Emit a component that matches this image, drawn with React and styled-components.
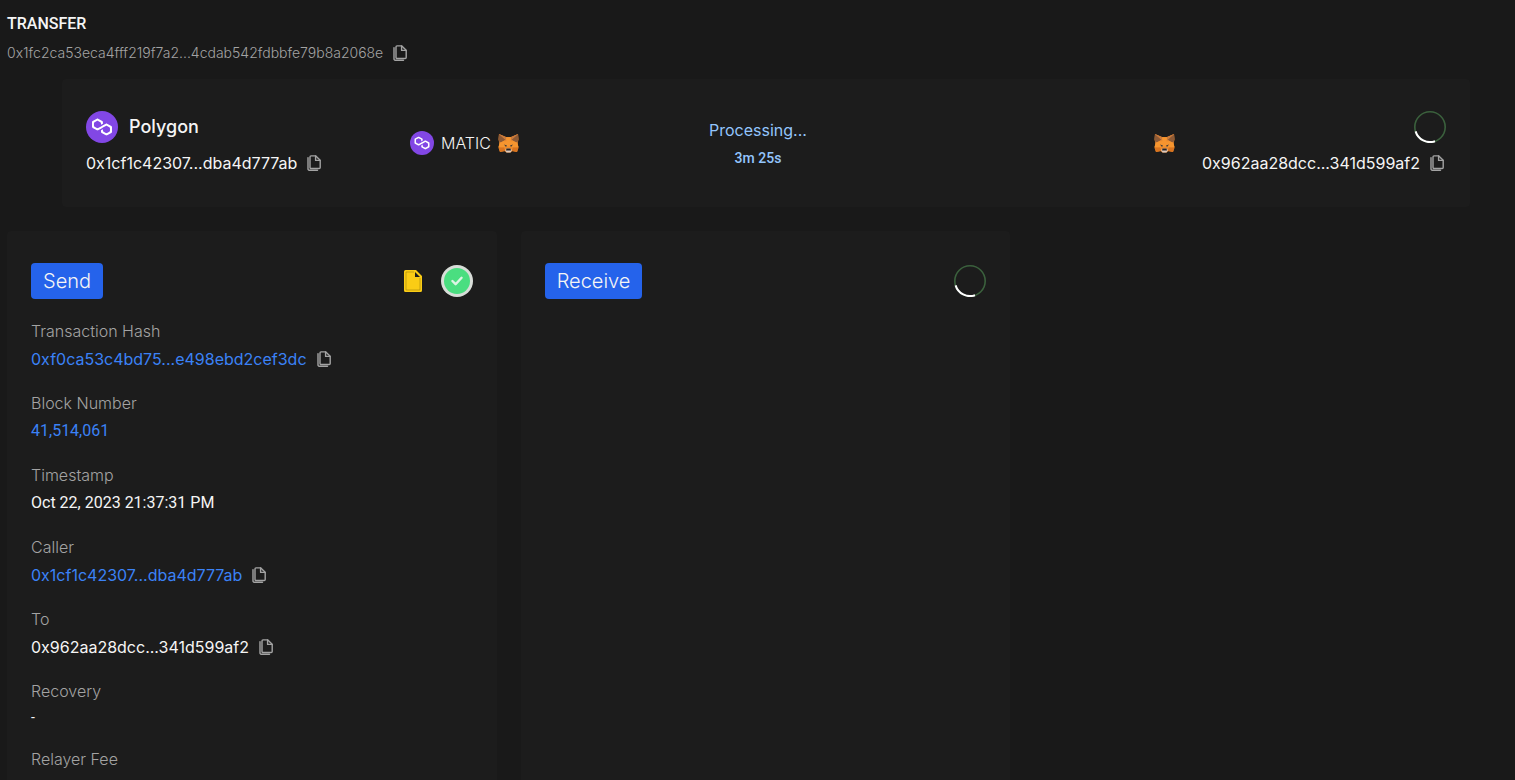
import React from 'react'
import styled, { createGlobalStyle } from 'styled-components'

const GlobalStyle = createGlobalStyle`
  * {
    box-sizing: border-box;
  }

  body {
    margin: 0;
    background: #191919;
    color: #f5f5f5;
    font-family: Inter, "Open Sans", sans-serif;
    font-size: 16px;
    line-height: 24px;
  }
`

const Page = styled.main`
  display: flex;
  flex-direction: column;
  height: 100vh;
  padding: 12px 0 0 7px;
  overflow: hidden auto;
  scrollbar-width: none;
`

const PageHeader = styled.header`
  display: flex;
  flex-direction: column;
  gap: 7px;
  margin-bottom: 16px;
`

const Title = styled.h1`
  margin: 0;
  font-family: Roboto, sans-serif;
  font-size: 16px;
  font-weight: 500;
  line-height: 24px;
`

const CopyLine = styled.div`
  display: flex;
  align-items: center;
  gap: 8px;
  color: ${props => props.$muted ? '#a3a3a3' : 'inherit'};
  font-family: Inter, sans-serif;
  font-size: ${props => props.$muted ? '14px' : '16px'};
  font-weight: ${props => props.$muted ? '300' : '400'};
  line-height: ${props => props.$muted ? '20px' : '24px'};
  white-space: nowrap;
`

const CopyButton = styled.button`
  display: flex;
  padding: 0 2px;
  border: 0;
  background: none;
  color: #a3a3a3;
  cursor: pointer;
`

const Summary = styled.section`
  display: grid;
  grid-template-columns: 324fr 156fr 384fr 225fr 271fr;
  align-items: center;
  margin: 0 45px 24px 55px;
  padding: 32px 24px;
  border-radius: 4px;
  background: #1c1c1c;
`

const Party = styled.div`
  display: flex;
  flex-direction: column;
  align-items: ${props => props.$end ? 'flex-end' : 'flex-start'};
  gap: 8px;
`

const Chain = styled.div`
  display: flex;
  align-items: center;
  gap: 11px;
  font-size: 18px;
  font-weight: 500;
`

const Asset = styled.div`
  display: flex;
  align-items: center;
  justify-content: ${props => props.$end ? 'flex-end' : 'flex-start'};
  gap: 7px;
  font-weight: 300;
`

const Status = styled.div`
  display: flex;
  flex-direction: column;
  align-items: center;
  gap: 4px;
  padding-top: 2px;
  color: #93c5fd;
`

const Elapsed = styled.span`
  font-family: Roboto, sans-serif;
  font-size: 14px;
  font-weight: 500;
`

const Cards = styled.div`
  display: grid;
  flex: 1 0 auto;
  grid-template-columns: repeat(3, 1fr);
  gap: 24px;
  margin-right: -9px;
`

const Card = styled.section`
  display: flex;
  flex-direction: column;
  gap: 20px;
  padding: 32px 24px;
  border-radius: 4px;
  background: #1c1c1c;
`

const CardHeader = styled.div`
  display: flex;
  align-items: center;
  justify-content: space-between;
`

const CardTitle = styled.h2`
  margin: 0;
  padding: 4px 12px;
  border-radius: 4px;
  background: #2563eb;
  font-size: 20px;
  font-weight: 300;
  line-height: 28px;
`

const CardIcons = styled.div`
  display: flex;
  align-items: center;
  gap: 19px;
`

const IconLink = styled.a`
  display: flex;
`

const Fields = styled.dl`
  display: flex;
  flex-direction: column;
  gap: 20px;
  margin: 0;
`

const Field = styled.div`
  display: flex;
  flex-direction: column;
  gap: 4px;
`

const Label = styled.dt`
  color: #a3a3a3;
  font-weight: 300;
`

const Value = styled.dd`
  margin: 0;
  font-family: Roboto, sans-serif;
`

const Empty = styled.div`
  font-size: 14px;
  line-height: 20px;
`

const Link = styled.a`
  color: #3b82f6;
  text-decoration: none;
`

const CopyIcon = () => (
  <svg width="14" height="16" viewBox="0 0 14 16" fill="none" stroke="currentColor" strokeWidth="1.4" strokeLinejoin="round" strokeLinecap="round">
    <path d="M4 .9h4.8l4.4 4.4v7.2a1 1 0 0 1-1 1H4a1 1 0 0 1-1-1V1.9a1 1 0 0 1 1-1z" />
    <path d="M8.6 1v4.4H13" />
    <path d="M1 2.6v11.5a1.1 1.1 0 0 0 1.1 1.1h8.4" />
  </svg>
)

const PolygonIcon = ({ size }) => (
  <svg width={size} height={size} viewBox="0 0 32 32">
    <circle cx="16" cy="16" r="16" fill="#8247e5" />
    <path fill="#fff" d="M21.092 12.693c-.369-.215-.848-.215-1.254 0l-2.879 1.654-1.955 1.078-2.879 1.653c-.369.216-.848.216-1.254 0l-2.288-1.294c-.369-.215-.627-.61-.627-1.042V12.19c0-.431.221-.826.627-1.042l2.25-1.258c.37-.216.85-.216 1.256 0l2.25 1.258c.37.216.628.611.628 1.042v1.654l1.955-1.115v-1.653a1.16 1.16 0 00-.627-1.042l-4.17-2.372c-.369-.216-.848-.216-1.254 0l-4.244 2.372A1.16 1.16 0 006 11.076v4.78c0 .432.221.827.627 1.043l4.244 2.372c.369.215.849.215 1.254 0l2.879-1.618 1.955-1.114 2.879-1.617c.369-.216.848-.216 1.254 0l2.251 1.258c.37.215.627.61.627 1.042v2.552c0 .431-.22.826-.627 1.042l-2.25 1.294c-.37.216-.85.216-1.255 0l-2.251-1.258c-.37-.216-.628-.611-.628-1.042v-1.654l-1.955 1.115v1.653c0 .431.221.827.627 1.042l4.244 2.372c.369.216.848.216 1.254 0l4.244-2.372c.369-.215.627-.61.627-1.042v-4.78a1.16 1.16 0 00-.627-1.042l-4.28-2.409z" />
  </svg>
)

const FoxIcon = () => (
  <svg width="21" height="20" viewBox="0 0 42 40">
    <path fill="#ec8a2c" d="M2 2l14 6h10l14-6 1 11-2 9 2 7-3 9-9-2-4 3H17l-4-3-9 2-3-9 2-7-2-9z" />
    <path fill="#8d5a36" d="M2 2l13 11-7 5-5 1-2-7zM40 2L27 13l7 5 5 1 2-7z" />
    <path fill="#c97a3c" d="M2 2l14 6 1 8zM40 2l-14 6-1 8z" />
    <path fill="#f6952f" d="M16 9h10l-2 18h-6zM3 20l8-4 6 1 1 11-11 1-6-1zM39 20l-8-4-6 1-1 11 11 1 6-1z" />
    <path fill="#d9741f" d="M1 29h11l3 7-11 2zM41 29H30l-3 7 11 2z" />
    <path fill="#3b3a3c" d="M12 23l6 2-2 3zM30 23l-6 2 2 3z" />
    <path fill="#dccabf" d="M14 34l4-3h6l4 3-3 5h-8z" />
    <path fill="#2a2422" d="M17 31h8l1 4H16z" />
  </svg>
)

const Spinner = () => (
  <svg width="32" height="32" viewBox="0 0 32 32" fill="none" role="img" aria-label="Loading">
    <circle cx="16" cy="16" r="15.2" stroke="#3b613d" strokeWidth="1.6" />
    <path d="M21 30.2A15 15 0 0 1 1.6 20.4" stroke="#fff" strokeWidth="2" />
  </svg>
)

const FileIcon = () => (
  <svg width="18" height="22" viewBox="0 0 18 22">
    <path fill="#facc15" d="M1.5 0H12l6 6v14.5a1.5 1.5 0 0 1-1.5 1.5h-15A1.5 1.5 0 0 1 0 20.5v-19A1.5 1.5 0 0 1 1.5 0z" />
    <path fill="none" stroke="#a3830f" strokeWidth=".6" d="M10 2H2v18h14V8" />
    <path fill="#1c1c1c" d="M11 2l5 5h-5z" />
  </svg>
)

const DoneIcon = () => (
  <svg width="32" height="32" viewBox="0 0 32 32" role="img" aria-label="Success">
    <circle cx="16" cy="16" r="16" fill="#d8ddd8" />
    <circle cx="16" cy="16" r="13" fill="#4ade80" />
    <path fill="none" stroke="#dcf5e4" strokeWidth="2.4" strokeLinecap="round" strokeLinejoin="round" d="M11.4 16l3.2 3.200 6-6.400" />
  </svg>
)

const Copyable = ({ value, href, muted }) => (
  <CopyLine $muted={muted}>
    {href ? <Link href={href}>{value}</Link> : <span>{value}</span>}
    <CopyButton type="button" aria-label={`Copy ${value}`}>
      <CopyIcon />
    </CopyButton>
  </CopyLine>
)

const fields = [
  { label: 'Transaction Hash', value: <Copyable value="0xf0ca53c4bd75...e498ebd2cef3dc" href="#tx" /> },
  { label: 'Block Number', value: <Link href="#block">41,514,061</Link> },
  { label: 'Timestamp', value: 'Oct 22, 2023 21:37:31 PM' },
  { label: 'Caller', value: <Copyable value="0x1cf1c42307...dba4d777ab" href="#caller" /> },
  { label: 'To', value: <Copyable value="0x962aa28dcc...341d599af2" /> },
  { label: 'Recovery', value: <Empty>-</Empty> },
  { label: 'Relayer Fee' },
]

const App = () => {
  return (
    <>
      <GlobalStyle />
      <Page>
        <PageHeader>
          <Title>TRANSFER</Title>
          <Copyable muted value="0x1fc2ca53eca4fff219f7a2...4cdab542fdbbfe79b8a2068e" />
        </PageHeader>
        <Summary>
          <Party>
            <Chain><PolygonIcon size={32} />Polygon</Chain>
            <Copyable value="0x1cf1c42307...dba4d777ab" />
          </Party>
          <Asset>
            <PolygonIcon size={24} />
            <span>MATIC</span>
            <FoxIcon />
          </Asset>
          <Status>
            <span>Processing...</span>
            <Elapsed>3m 25s</Elapsed>
          </Status>
          <Asset $end><FoxIcon /></Asset>
          <Party $end>
            <Spinner />
            <Copyable value="0x962aa28dcc...341d599af2" />
          </Party>
        </Summary>
        <Cards>
          <Card>
            <CardHeader>
              <CardTitle>Send</CardTitle>
              <CardIcons>
                <IconLink href="#receipt" aria-label="Receipt"><FileIcon /></IconLink>
                <DoneIcon />
              </CardIcons>
            </CardHeader>
            <Fields>
              {fields.map(field => (
                <Field key={field.label}>
                  <Label>{field.label}</Label>
                  {field.value && <Value>{field.value}</Value>}
                </Field>
              ))}
            </Fields>
          </Card>
          <Card>
            <CardHeader>
              <CardTitle>Receive</CardTitle>
              <Spinner />
            </CardHeader>
          </Card>
        </Cards>
      </Page>
    </>
  )
}

export default App
